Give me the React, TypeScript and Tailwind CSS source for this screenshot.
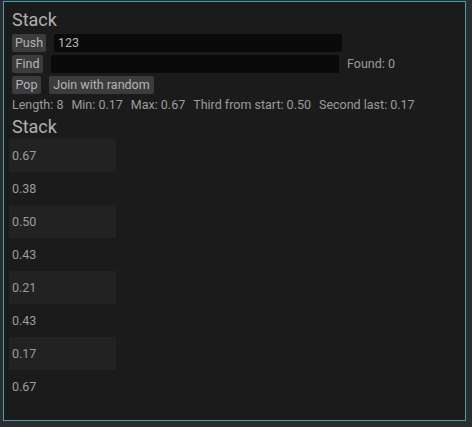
const values = ['0.67', '0.38', '0.50', '0.43', '0.21', '0.43', '0.17', '0.67'];

function Button({ label, width }: { label: string; width: string }) {
  return (
    <div
      className={`${width} flex h-[18px] items-center justify-center whitespace-nowrap rounded-[2px] bg-[#3c3c3c] text-[#b4b4b4]`}
    >
      {label}
    </div>
  );
}

export default function App() {
  return (
    <div
      className="h-[427px] w-[472px] overflow-hidden bg-[#2c2d31] pl-[3px] pt-[1px] text-[12.5px] leading-[16px] text-[#9c9c9c]"
      style={{ fontFamily: 'Roboto, "Open Sans", sans-serif' }}
    >
      <div className="h-[420px] w-[463px] border border-[#4b9ea3] bg-[#1b1b1b] pl-[8px] pt-[7px]">
        <div className="flex flex-col gap-[3px]">
          <div className="h-[22px] text-[18px] leading-[22px] text-[#b0b0b0]">Stack</div>

          <div className="flex h-[18px] items-center gap-[8px]">
            <Button label="Push" width="w-[34px]" />
            <div className="flex h-[18px] w-[288px] items-center rounded-[2px] bg-[#0a0a0a] px-[4px] text-[#b4b4b4]">
              123
            </div>
          </div>

          <div className="flex h-[18px] items-center gap-[8px]">
            <Button label="Find" width="w-[31px]" />
            <div className="h-[18px] w-[288px] rounded-[2px] bg-[#0a0a0a]" />
            <span>Found: 0</span>
          </div>

          <div className="flex h-[18px] items-center gap-[8px]">
            <Button label="Pop" width="w-[29px]" />
            <Button label="Join with random" width="w-[105px]" />
          </div>

          <div className="flex h-[16px] items-center gap-[8px] whitespace-nowrap">
            <span>Length: 8</span>
            <span>Min: 0.17</span>
            <span>Max: 0.67</span>
            <span>Third from start: 0.50</span>
            <span>Second last: 0.17</span>
          </div>

          <div className="h-[22px] text-[18px] leading-[22px] text-[#b0b0b0]">Stack</div>
        </div>

        <div className="mt-[1px] flex flex-col">
          {values.map((v, i) => (
            <div
              key={i}
              className={`-ml-[3px] flex h-[33px] w-[107px] items-center pl-[3px] ${i % 2 === 0 ? 'bg-[#222222]' : ''}`}
            >
              {v}
            </div>
          ))}
        </div>
      </div>
    </div>
  );
}
